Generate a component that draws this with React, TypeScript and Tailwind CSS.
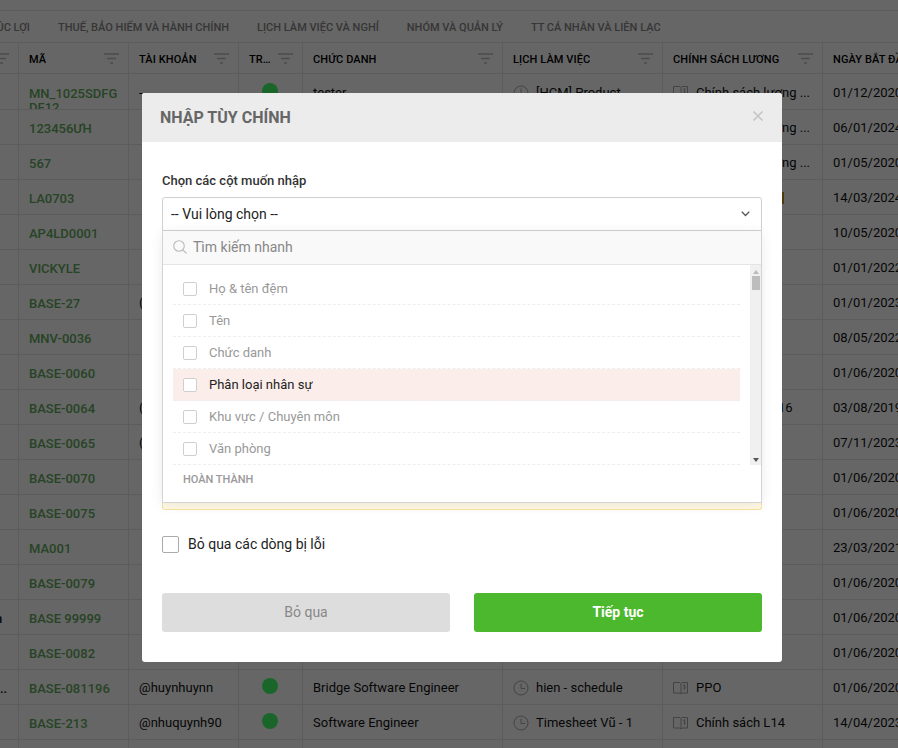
const tabs = ["THUẾ, BẢO HIỂM VÀ HÀNH CHÍNH", "LỊCH LÀM VIỆC VÀ NGHỈ", "NHÓM VÀ QUẢN LÝ", "TT CÁ NHÂN VÀ LIÊN LẠC"];

const rows = [
  { left: "", code: "MN_1025SDFG DF12", account: "-", dot: true, title: "tester", schedule: "[HCM] Product", policy: "Chính sách lương ...", date: "01/12/2020" },
  { left: "", code: "123456ƯH", account: "", dot: false, title: "", schedule: "", policy: "Chính sách lương ...", date: "06/01/2024" },
  { left: "", code: "567", account: "", dot: false, title: "", schedule: "", policy: "Chính sách lương ...", date: "01/05/2020" },
  { left: "", code: "LA0703", account: "", dot: false, title: "", schedule: "", policy: "", date: "14/03/2024", flag: true },
  { left: "", code: "AP4LD0001", account: "", dot: false, title: "", schedule: "", policy: "", date: "10/05/2020" },
  { left: "", code: "VICKYLE", account: "", dot: false, title: "", schedule: "", policy: "", date: "01/01/2022" },
  { left: "", code: "BASE-27", account: "(", dot: false, title: "", schedule: "", policy: "", date: "01/01/2023" },
  { left: "", code: "MNV-0036", account: "", dot: false, title: "", schedule: "", policy: "", date: "08/05/2022" },
  { left: "", code: "BASE-0060", account: "", dot: false, title: "", schedule: "", policy: "", date: "01/06/2020" },
  { left: "", code: "BASE-0064", account: "(", dot: false, title: "", schedule: "", policy: "Chính sách 2016", date: "03/08/2019" },
  { left: "", code: "BASE-0065", account: "(", dot: false, title: "", schedule: "", policy: "", date: "07/11/2023" },
  { left: "", code: "BASE-0070", account: "", dot: false, title: "", schedule: "", policy: "", date: "01/06/2020" },
  { left: "", code: "BASE-0075", account: "", dot: false, title: "", schedule: "", policy: "", date: "01/06/2020" },
  { left: "", code: "MA001", account: "", dot: false, title: "", schedule: "", policy: "", date: "23/03/2021" },
  { left: "", code: "BASE-0079", account: "", dot: false, title: "", schedule: "", policy: "", date: "01/06/2020" },
  { left: "n", code: "BASE 99999", account: "", dot: false, title: "", schedule: "", policy: "", date: "01/06/2020" },
  { left: "", code: "BASE-0082", account: "", dot: false, title: "", schedule: "", policy: "", date: "01/06/2020" },
  { left: "..", code: "BASE-081196", account: "@huynhuynn", dot: true, title: "Bridge Software Engineer", schedule: "hien - schedule", policy: "PPO", date: "01/06/2020" },
  { left: "", code: "BASE-213", account: "@nhuquynh90", dot: true, title: "Software Engineer", schedule: "Timesheet Vũ - 1", policy: "Chính sách L14", date: "14/04/2023" },
  { left: "", code: "", account: "", dot: false, title: "", schedule: "", policy: "", date: "" },
];

const options = ["Họ & tên đệm", "Tên", "Chức danh", "Phân loại nhân sự", "Khu vực / Chuyên môn", "Văn phòng"];

function FilterIcon() {
  return (
    <svg width="15" height="11" viewBox="0 0 15 11" className="shrink-0 text-[#bdbdbd]">
      <path d="M0 1h15M3 5.500h9M6 10h3" stroke="currentColor" strokeWidth="1.500" fill="none" />
    </svg>
  );
}

function ClockIcon() {
  return (
    <svg width="16" height="16" viewBox="0 0 16 16" className="shrink-0 text-[#a8a8a8]">
      <circle cx="8" cy="8" r="7" stroke="currentColor" fill="none" />
      <path d="M8 3.500V8.500H12" stroke="currentColor" fill="none" />
    </svg>
  );
}

function PolicyIcon() {
  return (
    <svg width="15" height="13" viewBox="0 0 15 13" className="shrink-0 text-[#a8a8a8]">
      <path d="M.5.500h6.500l1 1v10.500l-1-1H.5zM8 1.500l1-1h5.500v10.500H9l-1 1" stroke="currentColor" fill="none" />
      <path d="M12.500 3.200c-.4-.5-2-.6-2 .5s2 .8 2 1.900-1.700 1-2.200.4M11.500 2.200v6" stroke="currentColor" strokeWidth=".8" fill="none" />
    </svg>
  );
}

function HeadCell({ label, className }: { label: string; className: string }) {
  return (
    <div className={`flex shrink-0 items-center justify-between border-r border-[#e6e6e6] pl-2.5 pr-[9px] ${className}`}>
      <span className="truncate pt-1">{label}</span>
      <FilterIcon />
    </div>
  );
}

function Background() {
  return (
    <div className="text-[13px] text-[#111]">
      <div className="h-[11px] border-b border-[#e6e6e6]" />
      <div className="flex h-[32px] items-center border-b border-[#e6e6e6] pt-1 text-[11px] font-medium text-[#888]">
        <div className="flex w-[30px] shrink-0 justify-end overflow-hidden whitespace-nowrap">PHÚC LỢI</div>
        {tabs.map((t) => (
          <div key={t} className="ml-7 shrink-0 whitespace-nowrap">{t}</div>
        ))}
      </div>
      <div className="flex h-[31px] border-b border-[#e6e6e6] text-[11px] font-medium tracking-[0.1px] text-black">
        <div className="flex w-[19px] shrink-0 items-center overflow-hidden border-r border-[#e6e6e6]">
          <div className="-ml-1.5"><FilterIcon /></div>
        </div>
        <HeadCell label="MÃ" className="w-[110px]" />
        <HeadCell label="TÀI KHOẢN" className="w-[110px]" />
        <HeadCell label="TRẠNG THÁI" className="w-[64px]" />
        <HeadCell label="CHỨC DANH" className="w-[200px]" />
        <HeadCell label="LỊCH LÀM VIỆC" className="w-[160px]" />
        <HeadCell label="CHÍNH SÁCH LƯƠNG" className="w-[160px]" />
        <div className="flex w-[90px] shrink-0 items-center whitespace-nowrap pl-2.5 pt-1">NGÀY BẮT ĐẦU</div>
      </div>
      {rows.map((r, i) => (
        <div key={i} className={`flex border-b border-[#e6e6e6] ${i === 0 ? "h-[36px]" : "h-[35px]"}`}>
          <div className={`flex w-[19px] shrink-0 items-center overflow-hidden whitespace-nowrap border-r border-[#e6e6e6] pt-1 font-medium ${r.left === "n" ? "-indent-[5px]" : ""}`}>
            {r.left}
          </div>
          <div className="w-[110px] shrink-0 overflow-hidden border-r border-[#e6e6e6] pl-2.5 pr-1 font-medium leading-[14px] text-[#62aa5c]">
            <div className={`flex items-center ${i === 0 ? "h-[54px]" : "h-full pt-1"}`}>{r.code}</div>
          </div>
          <div className="flex w-[110px] shrink-0 items-center border-r border-[#e6e6e6] pl-2.5 pt-0.5">{r.account}</div>
          <div className="flex w-[64px] shrink-0 items-center justify-center border-r border-[#e6e6e6] pr-0.5">
            {r.dot && <div className="-mt-0.5 size-4 rounded-full bg-[#42ff69]" />}
          </div>
          <div className="flex w-[200px] shrink-0 items-center border-r border-[#e6e6e6] pl-2.5 pt-0.5">{r.title}</div>
          <div className="flex w-[160px] shrink-0 items-center gap-[7px] border-r border-[#e6e6e6] pl-2.5 pt-0.5">
            {r.schedule && <ClockIcon />}
            {r.schedule}
          </div>
          <div className="flex w-[160px] shrink-0 items-center gap-2 overflow-hidden whitespace-nowrap border-r border-[#e6e6e6] pl-2.5 pt-0.5">
            {r.policy && <PolicyIcon />}
            {r.policy}
            {r.flag && <div className="ml-[109px] h-3 w-0.5 shrink-0 bg-[#c89020]" />}
          </div>
          <div className="flex w-[90px] shrink-0 items-center whitespace-nowrap pl-2.5 pt-0.5 text-[13px]">{r.date}</div>
        </div>
      ))}
    </div>
  );
}

function Modal() {
  return (
    <div className="h-[569px] w-[640px] overflow-hidden rounded-[3px] bg-white">
      <div className="flex h-[49px] items-center justify-between bg-[#ececec] px-[18px]">
        <h2 className="text-base font-bold text-[#666]">NHẬP TÙY CHÍNH</h2>
        <svg width="12" height="12" viewBox="0 0 12 12" className="-mt-1 text-[#c4c4c4]">
          <path d="M1.500 1.500l9 9M10.500 1.500l-9 9" stroke="currentColor" strokeWidth="1.600" fill="none" />
        </svg>
      </div>
      <div className="px-5 pt-[30px]">
        <label className="block text-[13px] font-medium leading-[18px] text-[#333]">Chọn các cột muốn nhập</label>
        <div className="mt-[7px] flex h-[34px] items-center justify-between rounded-t-[3px] border border-[#cfcfcf] pl-2 pr-[11px] text-sm text-[#222]">
          <span>-- Vui lòng chọn --</span>
          <svg width="9" height="6" viewBox="0 0 9 6" className="text-[#555]">
            <path d="M.8.800l3.700 3.700 3.700-3.700" stroke="currentColor" strokeWidth="1.300" fill="none" />
          </svg>
        </div>
        <div className="relative h-[279px] rounded-b-[3px] border-x border-b border-[#f8e3a0] bg-[#fff9e6]">
          <div className="absolute -inset-x-px top-0 h-[272px] border-x border-b border-[#d4d4d4] bg-white shadow-[0_2px_12px_rgba(0,0,0,0.08)]">
            <div className="flex h-[34px] items-center gap-1.5 border-b border-[#e4e4e4] bg-[#f9f9f9] pb-0.5 pl-2.5 text-sm text-[#888]">
              <svg width="14" height="14" viewBox="0 0 14 14" className="text-[#bbb]">
                <circle cx="6" cy="6" r="5.300" stroke="currentColor" strokeWidth="1.100" fill="none" />
                <path d="M9.800 9.800L13.500 13.500" stroke="currentColor" strokeWidth="1.100" fill="none" />
              </svg>
              <span>Tìm kiếm nhanh</span>
            </div>
            <div className="flex h-[200px]">
              <div className="min-w-0 flex-1 px-2.5 pt-2">
                {options.map((o, i) => (
                  <div
                    key={o}
                    className={`flex h-[32px] items-center border-b border-dashed border-[#eeeeee] pl-2.5 text-[13px] ${i === 3 ? "bg-[#fbeeea] text-[#222]" : "text-[#999]"}`}
                  >
                    <div className="size-3.5 rounded-[2px] border border-[#cfcfcf] bg-white" />
                    <span className="ml-3">{o}</span>
                  </div>
                ))}
              </div>
              <div className="flex w-[11px] flex-col items-center justify-between bg-[#f0f0f0] pb-[3px] pt-[5px]">
                <div className="flex w-full flex-col items-center">
                  <div className="size-0 border-x-[3px] border-b-[4px] border-x-transparent border-b-[#bbb]" />
                  <div className="mt-[2px] h-[14px] w-[8px] bg-[#bdbdbd]" />
                </div>
                <div className="size-0 border-x-[3px] border-t-[4px] border-x-transparent border-t-[#555]" />
              </div>
            </div>
            <div className="pl-5 pt-2 text-[11px] font-medium leading-[14px] text-[#999]">HOÀN THÀNH</div>
          </div>
        </div>
        <div className="mt-6 flex items-center gap-[9px] text-sm text-[#222]">
          <div className="size-[17px] rounded-[2px] border border-[#aaa]" />
          <span>Bỏ qua các dòng bị lỗi</span>
        </div>
        <div className="mt-[39px] flex gap-6">
          <button className="h-[39px] flex-1 rounded-[3px] bg-[#dddddd] pb-0.5 text-sm text-[#888]">Bỏ qua</button>
          <button className="h-[39px] flex-1 rounded-[3px] bg-[#4cb82e] pb-0.5 text-sm font-bold text-white">Tiếp tục</button>
        </div>
      </div>
    </div>
  );
}

export default function App() {
  return (
    <div className="relative h-[748px] w-[898px] overflow-hidden bg-white font-['Roboto',sans-serif]">
      <Background />
      <div className="absolute inset-0 bg-black/60 pl-[142px] pt-[93px]">
        <Modal />
      </div>
    </div>
  );
}
